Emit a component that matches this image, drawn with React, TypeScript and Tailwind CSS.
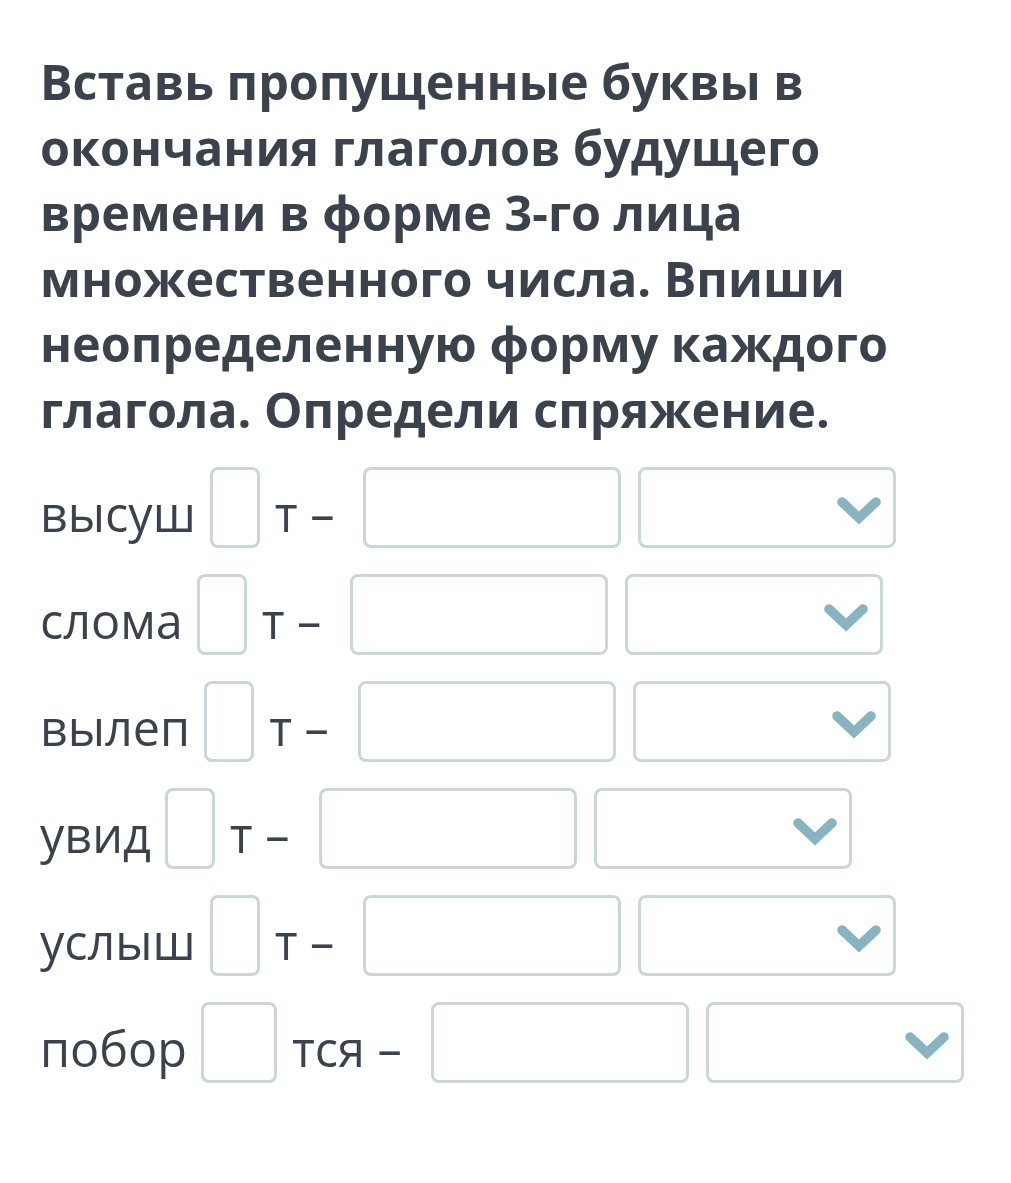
import React from 'react';

const rows = [
  { stem: 'высуш', end: 'т –', wide: false },
  { stem: 'слома', end: 'т –', wide: false },
  { stem: 'вылеп', end: 'т –', wide: false },
  { stem: 'увид', end: 'т –', wide: false },
  { stem: 'услыш', end: 'т –', wide: false },
  { stem: 'побор', end: 'тся –', wide: true },
];

function Chevron() {
  return (
    <svg width="46" height="30" viewBox="0 0 46 30" fill="none">
      <path d="M6 6 L23 22 L40 6" stroke="#88b4c0" strokeWidth="9.5" strokeLinejoin="miter" strokeLinecap="round" />
    </svg>
  );
}

export default function App() {
  return (
    <div className="min-h-[1183px] w-[1011px] bg-white pl-[40px] pt-[49px] text-[#3c424b]" style={{ fontFamily: '"Open Sans", sans-serif' }}>
      <h1 className="max-w-[940px] text-[48.5px] font-bold leading-[65.5px]">
        Вставь пропущенные буквы в окончания глаголов будущего времени в форме 3-го лица множественного числа. Впиши неопределенную форму каждого глагола. Определи спряжение.
      </h1>
      <div className="mt-[25px] flex flex-col gap-[26px]">
        {rows.map((r) => (
          <div key={r.stem} className="flex h-[81px] items-center">
            <span className="text-[48.5px] leading-none pt-[12px]">{r.stem}</span>
            <div className={`ml-[14px] h-[81px] ${r.wide ? 'w-[76px]' : 'w-[50px]'} rounded-[8px] border-[3px] border-[#cad7d9]`} />
            <span className="ml-[15px] text-[48.5px] leading-none pt-[12px]">{r.end}</span>
            <div className="ml-[29px] h-[81px] w-[258px] rounded-[8px] border-[3px] border-[#cad7d9]" />
            <div className="ml-[17px] flex h-[81px] w-[258px] items-center justify-end rounded-[8px] border-[3px] border-[#cad7d9] pr-[11px] pt-[6px]">
              <Chevron />
            </div>
          </div>
        ))}
      </div>
    </div>
  );
}
